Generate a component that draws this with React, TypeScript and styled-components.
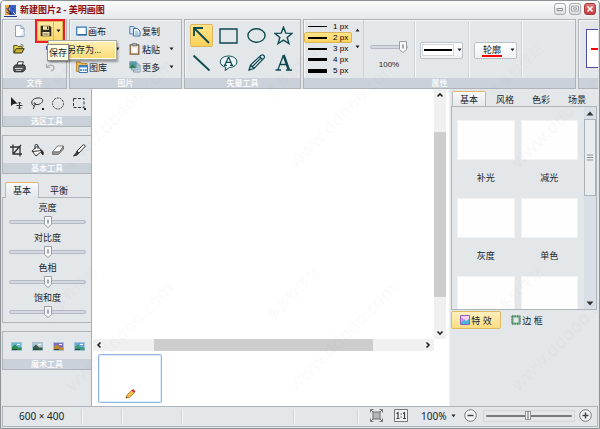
import React, { useState } from "react";
import styled, { createGlobalStyle, css } from "styled-components";

const ink = "#17242b";
const face = "#e3e7ea";
const line = "#aeb4b9";
const ui = `"Noto Sans", "Noto Sans CJK SC", sans-serif`;

const Global = createGlobalStyle`
  * { box-sizing: border-box; }
  html, body, #root { height: 100%; }
  body { margin: 0; overflow: hidden; font: 9px/13px ${ui}; color: ${ink}; }
  button, input { font: inherit; color: inherit; margin: 0; padding: 0; }
  button { background: none; border: 0; white-space: nowrap; }
  svg { display: block; flex: none; }
`;

const Shell = styled.div`
  position: relative;
  display: flex;
  flex-direction: column;
  height: 100%;
  padding: 0 1px 1px;
  border: 1px solid #8d9297;
  border-radius: 4px 4px 0 0;
  background: ${face};
  overflow: hidden;
`;

/* ---------- title bar ---------- */
const TitleBar = styled.header`
  display: flex;
  align-items: center;
  flex: none;
  height: 18px;
  padding: 0 2px;
  gap: 3px;
  background: linear-gradient(#fbfbfb, #e6e9eb);
`;
const Title = styled.h1`
  flex: 1;
  margin: 0;
  font-size: 9px;
  line-height: 16px;
  font-weight: 700;
  color: #8b0c16;
`;
const WindowButton = styled.button<{ $close?: boolean }>`
  display: grid;
  place-items: center;
  width: 12px;
  height: 12px;
  margin-bottom: 3px;
  border: 1px solid ${(p) => (p.$close ? "#a8393b" : "#a9a9ae")};
  border-radius: 3px;
  background: ${(p) => (p.$close ? "linear-gradient(#df7777, #c23c40)" : "linear-gradient(#fdfdfd, #dcdce0)")};
`;

/* ---------- ribbon ---------- */
const Ribbon = styled.nav`
  display: flex;
  flex: none;
  gap: 2px;
  height: 70px;
`;
const Group = styled.section<{ $width?: number }>`
  display: flex;
  flex-direction: column;
  flex: ${(p) => (p.$width ? `0 0 ${p.$width}px` : "1 1 0")};
  min-width: 0;
  border: 1px solid ${line};
  box-shadow: inset 1px 1px #f4f6f7;
`;
const GroupBody = styled.div`
  flex: 1;
  display: flex;
  min-height: 0;
`;
const GroupLabel = styled.h2`
  flex: none;
  height: 10px;
  margin: 0;
  background: #cbd1d9;
  color: #fff;
  font-size: 8px;
  line-height: 10px;
  font-weight: 500;
  text-align: center;
`;
const FileGrid = styled(GroupBody)`
  display: grid;
  grid-template-columns: 32px 30px;
  grid-auto-rows: 18px;
  padding-top: 2px;
  place-items: center;
`;
const PictureGrid = styled(GroupBody)`
  display: grid;
  grid-template-columns: 53px 51px;
  grid-auto-rows: 18px;
  padding: 2px 0 0 6px;
  align-items: center;
`;
const ToolButton = styled.button<{ $active?: boolean }>`
  display: flex;
  align-items: center;
  justify-content: center;
  gap: 1px;
  ${(p) =>
    p.$active &&
    css`
      background: linear-gradient(#ffe48b, #fdd158);
      box-shadow: 0 0 0 1px #dcb65a;
      border-radius: 1px;
    `}
`;
const Command = styled(ToolButton)`
  justify-content: flex-start;
`;
const CommandText = styled.span`
  width: 26px;
  text-align: left;
`;
const Split = styled.div`
  position: relative;
  display: flex;
  width: 26px;
  height: 20px;
  border: 1px solid #dcb65a;
`;
const SplitPart = styled.button`
  display: grid;
  place-items: center;
  flex: 1;
  background: linear-gradient(#ffe9a4, #fcd86a);
  & + & {
    flex: 0 0 9px;
    border-left: 1px solid #dcb65a;
  }
`;
const Highlight = styled.span`
  position: absolute;
  inset: -3px;
  border: 2px solid #ee1c24;
  pointer-events: none;
`;
const Menu = styled.div`
  position: absolute;
  z-index: 3;
  left: 10px;
  top: 18px;
  width: 69px;
  padding: 1px;
  border: 1px solid #a9a99c;
  background: #fff;
  box-shadow: 1px 2px 2px #0005;
`;
const MenuItem = styled.button`
  display: block;
  width: 100%;
  height: 16px;
  padding-left: 17px;
  text-align: left;
  line-height: 14px;
  background: linear-gradient(#fff0b4, #fbdc78);
`;
const Tooltip = styled.div`
  position: absolute;
  z-index: 4;
  left: 9px;
  top: 22px;
  padding: 1px;
  border: 1px solid #8d8d84;
  background: #ffffe8;
  box-shadow: 1px 1px 2px #0005;
  white-space: nowrap;
`;
const VectorGrid = styled(GroupBody)`
  display: grid;
  grid-template-columns: repeat(4, 1fr);
  grid-template-rows: 27px 27px;
  padding: 2px 3px 0;
  place-items: center;
`;
const VectorButton = styled(ToolButton)`
  width: 21px;
  height: 21px;
`;
const Cell = styled.div<{ $grow?: boolean; $width?: number }>`
  display: flex;
  flex-direction: column;
  align-items: center;
  justify-content: center;
  flex: ${(p) => (p.$grow ? "1" : `0 0 ${p.$width}px`)};
  margin: 2px 0 0;
  border-right: ${(p) => (p.$grow ? "0" : "1px solid #cdd2d6")};
  box-shadow: ${(p) => (p.$grow ? "none" : "1px 0 #f6f8f9")};
`;
const Widths = styled.div`
  display: flex;
  flex-direction: column;
  flex: 0 0 48px;
  padding-top: 1px;
`;
const WidthRow = styled.button<{ $active: boolean }>`
  display: flex;
  align-items: center;
  gap: 6px;
  height: 11px;
  padding-left: 3px;
  font: 8px/9px "Liberation Sans", sans-serif;
  color: #000;
  border: 1px solid ${(p) => (p.$active ? "#dcb65a" : "transparent")};
  border-radius: 2px;
  background: ${(p) => (p.$active ? "linear-gradient(#ffe48b, #fdd45c)" : "none")};
`;
const Stroke = styled.span<{ $size: number }>`
  width: 19px;
  height: ${(p) => p.$size}px;
  background: #000;
`;
const Steps = styled.div`
  display: flex;
  flex-direction: column;
  justify-content: center;
  align-items: center;
  gap: 4px;
  flex: 0 0 12px;
  padding-bottom: 22px;
  border-right: 1px solid #cdd2d6;
`;
const StepButton = styled.button`
  display: grid;
  place-items: center;
  width: 10px;
  height: 13px;
`;
const Percent = styled.output`
  padding-top: 4px;
  font: 500 8px/12px "Liberation Sans", sans-serif;
`;
const Combo = styled.button`
  position: relative;
  display: flex;
  align-items: center;
  justify-content: center;
  gap: 3px;
  width: 43px;
  height: 17px;
  border: 1px solid #bcc2c8;
  border-radius: 2px;
  background: linear-gradient(#fff, #eef1f4);
`;
const StrokeSample = styled.span`
  display: flex;
  align-items: center;
  width: 32px;
  height: 12px;
  padding: 0 1px;
  border: 1px solid #d0d4d8;
  background: #fff;
  &::after {
    content: "";
    flex: 1;
    height: 2px;
    background: #000;
  }
`;
const OutlineText = styled.span`
  margin-left: 7px;
  margin-right: 5px;
  padding: 0 1px;
  line-height: 11px;
  border-bottom: 2px solid #f00;
`;
const Preview = styled.div`
  flex: 0 0 40px;
  display: flex;
  align-items: center;
  height: 39px;
  margin: 9px 0 0 7px;
  border: 1px solid #4a4ea5;
  background: #fff;
  &::after {
    content: "";
    height: 2px;
    width: 30px;
    margin-left: 4px;
    background: #f00;
  }
`;
const Clip = styled.div`
  flex: 0 0 20px;
  display: flex;
  overflow: hidden;
`;

/* ---------- sliders ---------- */
const thumbSvg = `url("data:image/svg+xml,%3Csvg xmlns='http://www.w3.org/2000/svg' width='8' height='12'%3E%3Cpath d='M.5 .5h7v8L4 11.5.5 8.5z' fill='%23fafafa' stroke='%23999fa5'/%3E%3Cpath d='M4 3.500v4' stroke='%23858b90' stroke-width='1.500'/%3E%3C/svg%3E")`;
const Slider = styled.input.attrs({ type: "range" })`
  appearance: none;
  display: block;
  width: 100%;
  height: 16px;
  background: none;
  &::-webkit-slider-runnable-track {
    height: 4px;
    border: 1px solid #b3bac4;
    border-radius: 2px;
    background: #d4d9e1;
  }
  &::-webkit-slider-thumb {
    appearance: none;
    width: 8px;
    height: 12px;
    margin-top: -5px;
    background: ${thumbSvg} no-repeat;
  }
`;
const OpacitySlider = styled(Slider)`
  width: 38px;
  margin-top: 10px;
`;
const ZoomSlider = styled(Slider)`
  flex: none;
  width: 92px;
  height: 12px;
  margin-left: 2px;
  padding: 0 2px;
  border: 1px solid #d0d8df;
  &::-webkit-slider-runnable-track {
    height: 2px;
    border: 0;
    background: #777a7c;
  }
  &::-webkit-slider-thumb {
    width: 6px;
    height: 9px;
    margin-top: -4px;
    border: 1px solid #8e9499;
    background: linear-gradient(90deg, #fff 1px, #aaa 1px, #aaa 3px, #fff 3px);
  }
`;

/* ---------- workspace ---------- */
const Workspace = styled.main`
  display: flex;
  flex: 1;
  min-height: 0;
`;
const Side = styled.aside`
  display: flex;
  flex-direction: column;
  gap: 8px;
  flex: 0 0 90px;
  border-right: 1px solid #a8adb2;
`;
const ToolBox = styled.section<{ $first?: boolean }>`
  border: 1px solid ${line};
  border-right: 0;
  border-top-width: ${(p) => (p.$first ? 0 : 1)}px;
`;
const Tools = styled.div`
  display: grid;
  grid-template-columns: repeat(4, 1fr);
  place-items: center;
  height: 27px;
  padding: 2px 1px 0 3px;
`;
const TabRow = styled.div<{ $inset: number }>`
  display: flex;
  gap: 2px;
  padding-left: ${(p) => p.$inset}px;
`;
const Tab = styled.button<{ $active?: boolean; $width: number }>`
  flex: 0 1 ${(p) => p.$width}px;
  height: 16px;
  margin-bottom: -1px;
  line-height: 14px;
  border: 1px solid ${(p) => (p.$active ? "#b5babf" : "transparent")};
  border-top-color: ${(p) => (p.$active ? "#e6b565" : "transparent")};
  border-bottom: 0;
  border-radius: 2px 2px 0 0;
  background: ${(p) => (p.$active ? `linear-gradient(#f8f9fa, ${face})` : "none")};
`;
const Adjust = styled.div`
  height: 126px;
  padding: 3px 5px 0 6px;
  border: 1px solid ${line};
  border-right: 0;
`;
const AdjustRow = styled.label`
  display: block;
  height: 30px;
  text-align: center;
`;
const Center = styled.section`
  flex: 1;
  min-width: 0;
  display: flex;
  flex-direction: column;
  background: #fff;
`;
const CanvasGrid = styled.div`
  flex: 1;
  min-height: 0;
  display: grid;
  grid-template-columns: 1fr 12px;
  grid-template-rows: 1fr 12px;
  padding: 0 3px 0 1px;
`;
const Paper = styled.div`
  background: #fff;
`;
const Bar = styled.div<{ $row?: boolean }>`
  display: flex;
  flex-direction: ${(p) => (p.$row ? "row" : "column")};
  align-items: stretch;
  background: #f0f0f0;
`;
const BarArrow = styled.button`
  display: grid;
  place-items: center;
  flex: 0 0 12px;
`;
const Fill = styled.div<{ $part: number; $thumb?: boolean }>`
  flex: ${(p) => p.$part} 1 0;
  background: ${(p) => (p.$thumb ? "#cdcdcd" : "none")};
`;
const Pages = styled.div`
  flex: none;
  height: 55px;
  padding: 3px 6px;
`;
const Page = styled.button`
  display: flex;
  align-items: flex-end;
  justify-content: center;
  width: 64px;
  height: 49px;
  padding-bottom: 3px;
  border: 1px solid #94b9e2;
  border-radius: 2px;
  box-shadow: inset 0 0 0 1px #dceafa;
  background: #fff;
`;
const Effects = styled.aside`
  flex: 0 0 149px;
  display: flex;
  flex-direction: column;
  padding: 2px 1px 0;
  border-left: 1px solid #eff1f3;
`;
const Gallery = styled.div`
  display: flex;
  flex: none;
  height: 204px;
  border: 1px solid ${line};
`;
const Cards = styled.div`
  flex: 1;
  display: grid;
  grid-template-columns: 1fr 1fr;
  grid-auto-rows: 78px;
  column-gap: 6px;
  padding: 13px 6px 0 5px;
  overflow: hidden;
`;
const Card = styled.button`
  display: flex;
  flex-direction: column;
  gap: 11px;
  align-items: center;
  line-height: 13px;
`;
const Swatch = styled.span`
  width: 100%;
  height: 40px;
  background: #fefefe;
  border: 1px solid #f1f3f5;
`;
const GalleryBar = styled(Bar)`
  flex: 0 0 12px;
  background: #d8dfe7;
`;
const GalleryThumb = styled.div`
  display: grid;
  place-items: center;
  flex: 75 1 0;
  border: 1px solid #abb3bb;
  background: #e9ecef;
`;
const Modes = styled.div`
  display: flex;
  padding-top: 1px;
`;
const Mode = styled.button<{ $active: boolean }>`
  display: flex;
  align-items: center;
  justify-content: center;
  gap: 1px;
  width: 50px;
  height: 18px;
  border: 1px solid ${(p) => (p.$active ? "#deba61" : "transparent")};
  border-radius: 2px;
  background: ${(p) => (p.$active ? "linear-gradient(#fff0be, #fbdd82)" : "none")};
`;
const OtherMode = styled(Mode)`
  width: 52px;
`;

/* ---------- status bar ---------- */
const Status = styled.footer`
  display: flex;
  flex: none;
  height: 21px;
  border: 1px solid ${line};
  font-size: 10px;
`;
const StatusCell = styled.div<{ $width?: number }>`
  flex: ${(p) => (p.$width ? `0 0 ${p.$width}px` : "1")};
  margin: 2px 0;
  padding-left: 16px;
  line-height: 15px;
  border-right: 1px solid #f6f8f9;
  box-shadow: inset -1px 0 #ccd1d5;
`;
const ZoomArea = styled.div`
  display: flex;
  align-items: center;
  gap: 4px;
  flex: none;
  padding: 0 5px 2px 11px;
`;
const ZoomValue = styled.button`
  display: flex;
  align-items: center;
  justify-content: space-between;
  width: 35px;
  margin: 0 4px 0 9px;
  line-height: 14px;
`;
const FitButton = styled.button`
  margin-right: 7px;
`;

/* ---------- background text ---------- */
const Marks = styled.div`
  position: absolute;
  inset: 0;
  z-index: 9;
  overflow: hidden;
  pointer-events: none;
  color: rgba(105, 120, 165, 0.05);
`;
const Mark = styled.span<{ $x: number; $y: number; $size: number }>`
  position: absolute;
  left: ${(p) => p.$x}px;
  top: ${(p) => p.$y}px;
  font-size: ${(p) => p.$size}px;
  line-height: 20px;
  font-weight: 500;
  white-space: nowrap;
  transform: translate(-50%, -50%) rotate(-45deg);
`;

/* ---------- drawings ---------- */
type IconProps = { w?: number; h?: number; box?: string; children: React.ReactNode };
const Icon = ({ w = 13, h = 13, box, children }: IconProps) => (
  <svg width={w} height={h} viewBox={box ?? `0 0 ${w} ${h}`} fill="none" aria-hidden="true">
    {children}
  </svg>
);
const Arrow = ({ up }: { up?: boolean }) => (
  <Icon w={5} h={4}>
    <path d={up ? "M.5 3.500h4L2.500 .8z" : "M.5 .5h4L2.500 3.200z"} fill="#222" />
  </Icon>
);
const Chevron = ({ d }: { d: string }) => (
  <Icon w={8} h={8}>
    <path d={d} stroke="#222" strokeWidth="1.600" />
  </Icon>
);
const AppIcon = () => (
  <Icon w={13} h={13}>
    <path d="M1 1h11v10H1z" fill="#3c62c4" />
    <path d="M1 1h5v10H1z" fill="#f1a63a" />
    <path d="M6 1c-1 3-2 4-2 6h2v4M3 4v1.500M9 4v1.500M2.500 8c2 2 6 2 8 0" stroke="#17255f" />
    <path d="M0 12.500h13" stroke="#26398a" />
    <path d="M9 8l3 3" stroke="#d3e2ff" />
  </Icon>
);
const NewIcon = () => (
  <Icon w={11} h={12}>
    <path d="M1.500 .5h5.500l3 3v8h-8.500z" fill="#fff" stroke="#8ba0bf" />
    <path d="M7 .5v3h3" stroke="#8ba0bf" />
    <path d="M6 11l4-4v4z" fill="#d5e0f1" />
  </Icon>
);
const SaveIcon = () => (
  <Icon w={12} h={12}>
    <path d="M.7.7h9l1.600 1.600v9H.7z" fill="#2a2c22" />
    <path d="M3 1.200h6v3.600H3z" fill="#ffe9a8" />
    <path d="M7 1.500h1.300v2.500H7z" fill="#2a2c22" />
    <path d="M2.500 7h7v3.800h-7z" fill="#f3e3b0" />
    <path d="M3.500 9h5" stroke="#6b6340" />
  </Icon>
);
const OpenIcon = () => (
  <Icon w={12} h={10}>
    <path d="M.8 9V1.500h3.400l1 1.200h4v2" stroke="#4b4a13" fill="#f0d64a" />
    <path d="M.8 9l2.400-4.300h8L8.800 9z" fill="#c9b33c" stroke="#35340d" />
    <path d="M7.500 1c1.500-.8 2.500 0 3 1.300" stroke="#35340d" strokeWidth=".7" />
  </Icon>
);
const PrintIcon = () => (
  <Icon w={13} h={12}>
    <path d="M3.500 5L5 .8h5.300L9 5z" fill="#fff" stroke="#333" />
    <path d="M.8 5.500L2.500 4h8.700l1 1.500v3L10 10.800H1.500l-.7-1.300z" fill="#55585a" stroke="#222" />
    <path d="M2 7.500h7.500" stroke="#d6d6d6" />
    <path d="M3 9.500h5" stroke="#b9bcbe" />
  </Icon>
);
const TurnIcon = ({ color }: { color: string }) => (
  <Icon w={11} h={9}>
    <path d="M1.500 1v3.500H5M1.800 4.300C4 1 8.500 1.500 9 4.500c0 2-1 3-3 3.500" stroke={color} strokeWidth="1.200" />
  </Icon>
);
const CanvasIcon = () => (
  <Icon w={11} h={10}>
    <path d="M.7 1.200h9.600v7.600H.7z" fill="#fff" stroke="#3177b8" strokeWidth="1.200" />
    <path d="M2 8.800h8.500" stroke="#1d5c9c" />
  </Icon>
);
const LibraryIcon = () => (
  <Icon w={12} h={12}>
    <path d="M.5 1h4l1 1.500H11v8H.5z" fill="#efbd55" stroke="#c18c2d" />
    <path d="M3 4.500h8.500v7H3z" fill="#fff" stroke="#3976b5" />
    <path d="M3 5h8.500v1.500H3z" fill="#3b8ad3" />
    <path d="M4 8h2v2H4zM6.800 8h1.700v2H6.800zM9 8h1.800v2H9z" fill="#4f98d8" />
  </Icon>
);
const CopyIcon = () => (
  <Icon w={12} h={12}>
    <path d="M.8 1.500h4l2 2v5.500h-6z" fill="#d5e7fa" stroke="#4f80bb" />
    <path d="M4.500 3.500h4l2.500 2.500v5H4.500z" fill="#eef6ff" stroke="#3d6ca6" />
    <path d="M6 7h3M6 9h3.500" stroke="#6d9bd0" />
  </Icon>
);
const PasteIcon = () => (
  <Icon w={12} h={12}>
    <path d="M1.200 1.800h8.600v9.400H1.200z" fill="#efe5d2" stroke="#7b5a35" strokeWidth="1.200" />
    <path d="M3.500 .6h4v2.200h-4z" fill="#b6bdc5" stroke="#59636e" strokeWidth=".8" />
    <path d="M3.500 4.500h4.500v5H3.500z" fill="#fff" />
  </Icon>
);
const MoreIcon = () => (
  <Icon w={12} h={12}>
    <path d="M4.500 4h6.500v7H4.500z" fill="#e3edf3" stroke="#7c98ab" />
    <path d="M2.500 2.300H9V9H2.500z" fill="#d4e5ee" stroke="#7c98ab" />
    <path d="M.8 .8h6.500V7H.8z" fill="#4f9fa9" stroke="#7c98ab" />
    <path d="M1 6l2.500-3L7 7H1z" fill="#348253" />
  </Icon>
);

const vectorDrawings: Record<string, React.ReactNode> = {
  箭头: <path d="M2 10V2h9M2.500 2.500L17 17" strokeWidth="1.800" />,
  矩形: <path d="M1 3h17v14H1z" />,
  椭圆: <ellipse cx="9.500" cy="9.500" rx="8.600" ry="6.800" />,
  星形: <path d="M9.500 1.200l2.300 5.900 6.300.3-4.900 4 1.700 6.100-5.400-3.400-5.400 3.400 1.700-6.100-4.900-4 6.300-.3z" />,
  直线: <path d="M1.500 2.500L17.500 17.500" strokeWidth="1.800" />,
  文字气泡: (
    <>
      <path d="M7 14.300C-1 13-1 3.300 9.500 3c11 .3 11 11 1 11.500L6 17.500z" fill="#edf4fa" strokeWidth="1" />
      <path d="M5.800 12L9.300 4.500h.6L13 12M7 9.300h4.800M4.800 12.300h3M11 12.300h3" strokeWidth="1.200" />
    </>
  ),
  铅笔: <path d="M2 17l1.500-5L14 2.200c2.500-1 4.300 1 3 3L7 15.500zM3.500 12L7 15.500M12.500 3.500L16 7M5.500 13.500l8.500-8.500M2 17l2-1" strokeWidth="1.200" />,
  文字: (
    <>
      <path d="M4 16.500L9.300 2.500M6 11.500h7.200M1.500 17h5.500M12 17h6" strokeWidth="1.300" />
      <path d="M9.600 2l5.300 15" strokeWidth="2.500" />
    </>
  ),
};

const Dots = <path d="M12 12h2v2h-2z" fill="#222" stroke="none" />;
const selectTools: [string, React.ReactNode][] = [
  ["移动", <><path d="M2 1v9l2.500-2 4-.5z" fill="#222" stroke="none" /><path d="M7.500 9.500h6M10.500 6.500v6M9 7.500l1.500-1.500L12 7.500M9 11.500l1.500 1.500L12 11.500" /></>],
  ["套索", <><path d="M4 10C.5 8 1 3.500 6 2.200c5-1 7.500 1 6.500 3.300S7.500 9.500 4.500 8c-1.500-.8 0-2 .8-.8C6 9 3.500 10 3.500 13" />{Dots}</>],
  ["椭圆选区", <ellipse cx="7" cy="7.500" rx="5.500" ry="5.500" strokeDasharray="2 1" />],
  ["矩形选区", <><path d="M1.500 2.500h10.500v9H1.500z" strokeDasharray="3 1.500" />{Dots}</>],
];
const basicTools: [string, React.ReactNode][] = [
  ["裁剪", <path d="M4 1.500v9.500h9M1 4h10v9.500M4.500 10.500L12 2" strokeWidth="1.300" />],
  ["油漆桶", <><path d="M2 8l5.500-5L12 8l-6 5z" fill="#fff" /><path d="M5 6V2.500C5 1 8 1 8 3v3M3 8.500l8-1" /><path d="M11 7c2.500 1 2.500 2.500 2 5-2-1-1-3-2-5z" fill="#222" /></>],
  ["橡皮", <><path d="M1.500 9l5-6h6l-4 6z" fill="#fff" stroke="#777" /><path d="M1.500 9v2.500h6L12.500 6V3l-4 6z" fill="#9b9b9b" stroke="#777" /></>],
  ["画笔", <><path d="M5 8l6.500-6.500 2 1.500L7 10z" fill="#fff" /><path d="M1.500 12.800c2.500 0 4-.8 5.500-2.800L5 8c-.8 2.200-1.800 3.500-3.500 4.800z" fill="#333" /></>],
];
const magicTools: [string, string, string][] = [
  ["增强", "#67b7dd", "#2c8a4b"],
  ["黑白", "#b9c9d4", "#3a5a48"],
  ["暖色", "#7c6fc2", "#c0872b"],
  ["冷色", "#67a9e8", "#3c9a74"],
];

const lineSizes = [1, 2, 2, 3, 4];
const effects = ["补光", "减光", "灰度", "单色", "", ""];
const markRows = [0, 1].flatMap((r) => [0, 1, 2].map((c) => [c * 223, r * 223]));

export default function App() {
  const [tool, setTool] = useState("箭头");
  const [width, setWidth] = useState(1);
  const [mode, setMode] = useState(0);

  return (
    <Shell>
      <Global />
      <TitleBar>
        <AppIcon />
        <Title>新建图片2 - 美明画图</Title>
        <WindowButton aria-label="最小化">
          <Icon w={8} h={6}><path d="M1 2.500h5.500v2H1z" fill="#fff" stroke="#8b8e95" /></Icon>
        </WindowButton>
        <WindowButton aria-label="最大化">
          <Icon w={8} h={7}><path d="M.5 1h7v5h-7zM2.500 2.800h3v1.500h-3z" fill="#fff" stroke="#9a9da3" /></Icon>
        </WindowButton>
        <WindowButton $close aria-label="关闭">
          <Icon w={8} h={8}><path d="M1.500 1.500l5 5m0-5l-5 5" stroke="#fff" strokeWidth="1.700" /></Icon>
        </WindowButton>
      </TitleBar>

      <Ribbon>
        <Group $width={65}>
          <FileGrid>
            <ToolButton aria-label="新建"><NewIcon /></ToolButton>
            <Split>
              <SplitPart aria-label="保存"><SaveIcon /></SplitPart>
              <SplitPart aria-label="保存选项"><Arrow /></SplitPart>
              <Highlight />
              <Menu role="menu"><MenuItem role="menuitem">另存为...</MenuItem></Menu>
              <Tooltip role="tooltip">保存</Tooltip>
            </Split>
            <ToolButton aria-label="打开"><OpenIcon /></ToolButton>
            <ToolButton aria-label="重做"><TurnIcon color="#5961a5" /></ToolButton>
            <ToolButton aria-label="打印"><PrintIcon /></ToolButton>
            <ToolButton aria-label="撤销"><TurnIcon color="#a9adb1" /></ToolButton>
          </FileGrid>
          <GroupLabel>文件</GroupLabel>
        </Group>
        <Group $width={113}>
          <PictureGrid>
            <Command><CanvasIcon /><CommandText>画布</CommandText></Command>
            <Command><CopyIcon /><CommandText>复制</CommandText></Command>
            <Command aria-label="旋转"><Icon w={11} h={10}>{null}</Icon><CommandText /><Arrow /></Command>
            <Command><PasteIcon /><CommandText>粘贴</CommandText><Arrow /></Command>
            <Command><LibraryIcon /><CommandText>图库</CommandText></Command>
            <Command><MoreIcon /><CommandText>更多</CommandText><Arrow /></Command>
          </PictureGrid>
          <GroupLabel>图片</GroupLabel>
        </Group>
        <Group $width={117}>
          <VectorGrid>
            {Object.entries(vectorDrawings).map(([name, drawing]) => (
              <VectorButton key={name} aria-label={name} $active={tool === name} onClick={() => setTool(name)}>
                <Icon w={19} h={19}>
                  <g stroke="#0d4a50" strokeWidth="1.400">{drawing}</g>
                </Icon>
              </VectorButton>
            ))}
          </VectorGrid>
          <GroupLabel>矢量工具</GroupLabel>
        </Group>
        <Group>
          <GroupBody>
            <Widths>
              {lineSizes.map((size, i) => (
                <WidthRow key={i} $active={width === i} onClick={() => setWidth(i)}>
                  <Stroke $size={size} />
                  {i + 1} px
                </WidthRow>
              ))}
            </Widths>
            <Steps>
              <StepButton aria-label="上一项"><Arrow up /></StepButton>
              <StepButton aria-label="下一项"><Arrow /></StepButton>
            </Steps>
            <Cell $width={51}>
              <OpacitySlider aria-label="不透明度" defaultValue={100} />
              <Percent>100%</Percent>
            </Cell>
            <Cell $width={54}>
              <Combo aria-label="线型"><StrokeSample /><Arrow /></Combo>
            </Cell>
            <Cell $width={53}>
              <Combo><OutlineText>轮廓</OutlineText><Arrow /></Combo>
            </Cell>
            <Cell $grow />
          </GroupBody>
          <GroupLabel>属性</GroupLabel>
        </Group>
        <Clip>
          <Group $width={60}>
            <GroupBody><Preview /></GroupBody>
            <GroupLabel />
          </Group>
        </Clip>
      </Ribbon>

      <Workspace>
        <Side>
          {[{ title: "选区工具", items: selectTools }, { title: "基本工具", items: basicTools }].map((box, i) => (
            <ToolBox key={box.title} $first={i === 0}>
              <Tools>
                {box.items.map(([name, drawing]) => (
                  <ToolButton key={name} aria-label={name}>
                    <Icon w={15} h={15}><g stroke="#333" strokeWidth="1">{drawing}</g></Icon>
                  </ToolButton>
                ))}
              </Tools>
              <GroupLabel>{box.title}</GroupLabel>
            </ToolBox>
          ))}
          <div>
            <TabRow $inset={3} role="tablist">
              <Tab role="tab" $active $width={34}>基本</Tab>
              <Tab role="tab" $width={36}>平衡</Tab>
            </TabRow>
            <Adjust>
              {["亮度", "对比度", "色相", "饱和度"].map((name) => (
                <AdjustRow key={name}>{name}<Slider defaultValue={50} /></AdjustRow>
              ))}
            </Adjust>
          </div>
          <ToolBox>
            <Tools>
              {magicTools.map(([name, sky, land]) => (
                <ToolButton key={name} aria-label={name}>
                  <Icon w={11} h={9}>
                    <path d="M.5 .5h10v8H.5z" fill={sky} stroke="#a5c0d5" />
                    <path d="M1 5l3-2.500L7 5.500h3.500V8H1z" fill={land} />
                    <path d="M6 2.500h3" stroke="#f2f8fb" />
                    <path d="M1 7h5v1H1z" fill="#24453a" />
                  </Icon>
                </ToolButton>
              ))}
            </Tools>
            <GroupLabel>魔术工具</GroupLabel>
          </ToolBox>
        </Side>

        <Center>
          <CanvasGrid>
            <Paper />
            <Bar>
              <BarArrow aria-label="向上滚动"><Chevron d="M1.500 5.500L4 3l2.500 2.500" /></BarArrow>
              <Fill $part={31} />
              <Fill $part={165} $thumb />
              <Fill $part={30} />
              <BarArrow aria-label="向下滚动"><Chevron d="M1.500 2.500L4 5l2.500-2.500" /></BarArrow>
            </Bar>
            <Bar $row>
              <BarArrow aria-label="向左滚动"><Chevron d="M5.500 1.500L3 4l2.500 2.500" /></BarArrow>
              <Fill $part={49} />
              <Fill $part={218} $thumb />
              <Fill $part={49} />
              <BarArrow aria-label="向右滚动"><Chevron d="M2.500 1.500L5 4 2.500 6.500" /></BarArrow>
            </Bar>
          </CanvasGrid>
          <Pages>
            <Page aria-label="图片2">
              <Icon w={11} h={11}>
                <path d="M1 10l1-3 5-5 2.500 2.500-5 5z" fill="#f4bd49" stroke="#b56e22" strokeWidth=".8" />
                <path d="M6.500 2.500L8 1l2.500 2.200L9 4.800z" fill="#cf2f36" />
                <path d="M1 10l.5-1.500L2.500 9.500z" fill="#333" />
              </Icon>
            </Page>
          </Pages>
        </Center>

        <Effects>
          <TabRow $inset={1} role="tablist">
            <Tab role="tab" $active $width={34}>基本</Tab>
            <Tab role="tab" $width={34}>风格</Tab>
            <Tab role="tab" $width={34}>色彩</Tab>
            <Tab role="tab" $width={34}>场景</Tab>
          </TabRow>
          <Gallery>
            <Cards>
              {effects.map((name, i) => (
                <Card key={i} aria-label={name || `效果${i + 1}`}><Swatch />{name}</Card>
              ))}
            </Cards>
            <GalleryBar>
              <BarArrow aria-label="向上滚动"><Icon w={8} h={5}><path d="M.5 4.500h7L4 .5z" fill="#333" /></Icon></BarArrow>
              <GalleryThumb><Icon w={6} h={7}><path d="M0 1h6M0 3.500h6M0 6h6" stroke="#8c9297" /></Icon></GalleryThumb>
              <Fill $part={102} />
              <BarArrow aria-label="向下滚动"><Icon w={8} h={5}><path d="M.5 .5h7L4 4.500z" fill="#333" /></Icon></BarArrow>
            </GalleryBar>
          </Gallery>
          <Modes>
            <Mode $active={mode === 0} onClick={() => setMode(0)}>
              <Icon w={10} h={10}>
                <path d="M.5 .5h9v9h-9z" fill="#f6d3f3" stroke="#8a5fc6" />
                <path d="M1 7l3-3 2 2 3-2v5H1z" fill="#4bb2dd" />
                <path d="M1 2l4 3-4 2z" fill="#e88cd6" />
              </Icon>
              特 效
            </Mode>
            <OtherMode $active={mode === 1} onClick={() => setMode(1)}>
              <Icon w={10} h={10}>
                <path d="M1.500 1.500h7v7h-7z" stroke="#75aa86" strokeWidth="2" />
                <path d="M1 1h8v8H1z" stroke="#3c7a55" strokeDasharray="1.500 1" />
              </Icon>
              边 框
            </OtherMode>
          </Modes>
        </Effects>
      </Workspace>

      <Status>
        <StatusCell $width={80}>600 × 400</StatusCell>
        <StatusCell $width={40} />
        <StatusCell $width={60} />
        <StatusCell $width={112} />
        <StatusCell />
        <ZoomArea>
          <FitButton aria-label="适合窗口">
            <Icon w={13} h={13}>
              <path d="M3 3h7v7H3z" fill="#b5b8ba" stroke="#6b6e70" />
              <path d="M.5 3.500v-3h3M9.500 .5h3v3M12.500 9.500v3h-3M3.500 12.500h-3v-3M.5 .5L3 3M12.500 .5L10 3M12.500 12.500L10 10M.5 12.500L3 10" stroke="#77797b" />
            </Icon>
          </FitButton>
          <button aria-label="实际大小">
            <Icon w={14} h={13}>
              <path d="M.5 .5h13v12H.5z" fill="#f1f2f3" stroke="#75797c" />
              <path d="M2.500 4.500L4 3.500v6M9 4.500l1.500-1v6M2.500 9.500h3M9 9.500h3M6.500 5h1.200M6.500 8h1.200" stroke="#444" strokeWidth="1.200" />
            </Icon>
          </button>
          <ZoomValue>100%<Arrow /></ZoomValue>
          <button aria-label="缩小">
            <Icon w={13} h={13}><circle cx="6.500" cy="6.500" r="5.800" fill="#f3f4f5" stroke="#76797c" /><path d="M3.500 6.500h6" stroke="#444" strokeWidth="1.500" /></Icon>
          </button>
          <ZoomSlider aria-label="缩放" defaultValue={49} />
          <button aria-label="放大">
            <Icon w={13} h={13}><circle cx="6.500" cy="6.500" r="5.800" fill="#f3f4f5" stroke="#76797c" /><path d="M3.500 6.500h6M6.500 3.500v6" stroke="#444" strokeWidth="1.500" /></Icon>
          </button>
        </ZoomArea>
      </Status>

      <Marks aria-hidden="true">
        {markRows.map(([x, y]) => (
          <React.Fragment key={`${x}-${y}`}>
            <Mark $x={x + 69} $y={y + 70} $size={14}>多多软件站</Mark>
            <Mark $x={x + 118} $y={y + 112} $size={18}>www.ddooo.com</Mark>
          </React.Fragment>
        ))}
      </Marks>
    </Shell>
  );
}
